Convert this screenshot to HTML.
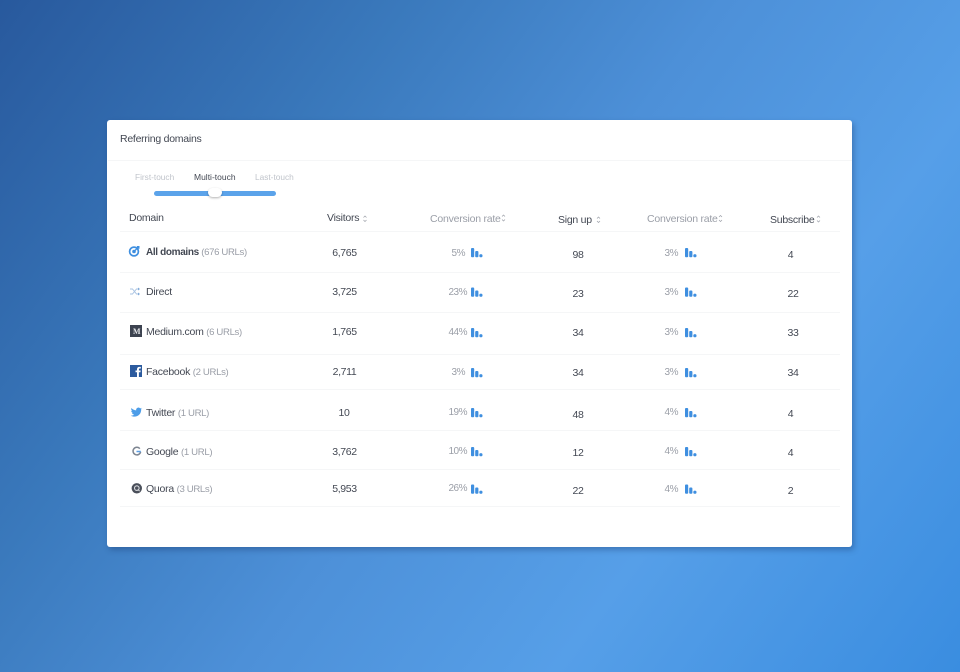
<!DOCTYPE html>
<html><head><meta charset="utf-8"><style>
html,body{margin:0;padding:0;width:960px;height:672px;overflow:hidden}
body{position:relative;background:linear-gradient(126deg,#28599d 0%,#3a79bc 28%,#4d90d8 50%,#569fe8 72%,#3a8de0 100%);font-family:"Liberation Sans",sans-serif;font-size:10.5px;letter-spacing:-.25px;color:#434853}
#card{position:absolute;left:107px;top:120px;width:745px;height:427px;background:#fff;border-radius:3px;box-shadow:2px 3px 6px rgba(20,50,100,.35)}
.t{position:absolute;white-space:nowrap;line-height:14px;height:14px;margin-top:2px;filter:blur(.25px)}
.c{transform:translateX(-50%)}
.g{color:#9a9ea7}
span.g{font-size:9.600px;letter-spacing:-.35px}
div.g{font-size:10px;letter-spacing:-.5px}
div.h{font-size:10.5px;letter-spacing:-.23px}
.n{letter-spacing:-.35px}
.s{font-size:8.300px;letter-spacing:0}
.l{position:absolute;left:120px;width:720px;height:1px;background:#f5f6f7}
svg{position:absolute;overflow:visible}
</style></head><body>
<div id="card"></div>
<div class="l" style="left:108px;width:744px;top:160px"></div>
<div class="l" style="top:231px"></div><div class="l" style="top:272px"></div><div class="l" style="top:312px"></div><div class="l" style="top:354px"></div><div class="l" style="top:389px"></div><div class="l" style="top:430px"></div><div class="l" style="top:469px"></div><div class="l" style="top:506px"></div>

<div class="t" style="left:120px;top:130px">Referring domains</div>
<div class="t s" style="left:135px;top:168px;color:#c0c4cb">First-touch</div>
<div class="t s" style="left:194px;top:168px;font-size:8.500px">Multi-touch</div>
<div class="t s" style="left:255px;top:168px;color:#c0c4cb">Last-touch</div>
<div style="position:absolute;left:154px;top:191px;width:122px;height:4.500px;border-radius:3px;background:#5ba3ea"></div>
<div style="position:absolute;left:208px;top:188px;width:14px;height:9px;border-radius:5px;background:#fff;box-shadow:0 1px 2px rgba(0,0,0,.3)"></div>

<div class="t" style="left:129px;top:209px">Domain</div>
<div class="t" style="left:327px;top:209px">Visitors</div>
<div class="t g h" style="left:430px;top:210px">Conversion rate</div>
<div class="t" style="left:558px;top:211px">Sign up</div>
<div class="t g h" style="left:647px;top:210px">Conversion rate</div>
<div class="t" style="left:770px;top:211px">Subscribe</div>

<svg width="960" height="672" style="left:0;top:0" fill="none" stroke="#9a9ea7" stroke-width=".7">
<path d="M363.500 217.500l1.500-1.500 1.500 1.500M363.500 220l1.500 1.500 1.500-1.500"/>
<path d="M502 216.500l1.500-1.500 1.500 1.500M502 219.500l1.500 1.500 1.500-1.500"/>
<path d="M597 218.500l1.500-1.500 1.500 1.500M597 221l1.500 1.500 1.500-1.500"/>
<path d="M719 217l1.500-1.500 1.500 1.500M719 220l1.500 1.500 1.500-1.500"/>
<path d="M817 217.500l1.500-1.500 1.500 1.500M817 220.500l1.500 1.500 1.500-1.500"/>
</svg>

<!-- icons -->
<svg style="left:0;top:0" width="960" height="672">
<circle cx="134" cy="251.500" r="4.400" fill="none" stroke="#3f8fe0" stroke-width="1.700"/><circle cx="134" cy="251.500" r="1.800" fill="#3f8fe0"/><path d="M134 251.500l4.500-4.500" stroke="#3f8fe0" stroke-width="1.300"/><path d="M136.800 246h2.700v2.700h-2.300z" fill="#3f8fe0"/>
<path d="M130 289h2.500l4 5h2.500M130 294h2.500l4-5h2.500" fill="none" stroke="#a9c3e2" stroke-width=".9"/><path d="M138 287.500l2 1.500-2 1.500zM138 292.500l2 1.500-2 1.500z" fill="#7fa8d8"/>
<rect x="130" y="325" width="12" height="12" fill="#3d4350"/>
<rect x="130" y="365" width="12" height="12" fill="#2c5b9e"/><path d="M138.900 377v-4.700h1.500l.3-1.800h-1.800v-1.100c0-.6.2-.9.9-.9h1v-1.600h-1.400c-1.500 0-2.400.9-2.400 2.300v1.300h-1.500v1.800h1.500v4.700z" fill="#fff"/>
<path d="M141.500 408.300c-.4.2-.8.300-1.300.4.500-.3.800-.7 1-1.200-.4.300-.9.500-1.400.6a2.300 2.300 0 0 0-3.900 2.100c-1.900-.1-3.600-1-4.700-2.400-.6 1-.3 2.300.7 3-.4 0-.7-.1-1-.3 0 1.100.8 2 1.800 2.300-.3.100-.7.100-1 0 .3.900 1.100 1.500 2.100 1.600-1 .8-2.200 1.100-3.400 1 4.700 2.800 10.800-.2 10.500-6.500.5-.3.900-.7 1.200-1.100z" fill="#4d9de8" transform="translate(.3 .2)"/>
<path d="M139.800 448.700a3.800 3.800 0 1 0 .8 3" fill="none" stroke="#7d8591" stroke-width="1.500"/><path d="M136.500 451.500h4.300" stroke="#5b9ee4" stroke-width="1.500"/>
<circle cx="136.800" cy="488.300" r="5.200" fill="#4a4f5a"/><circle cx="136.800" cy="488.100" r="2.300" fill="none" stroke="#d8dade" stroke-width="1.100"/><path d="M137.800 489.300l1.800 1.800" stroke="#d8dade"/>
</svg>
<div class="t" style="left:133px;top:323px;font:bold 8px/14px 'Liberation Serif',serif;color:#e8e9ec">M</div>

<!-- names -->
<div class="t" style="left:146px;top:244px;font-weight:bold;font-size:10px;letter-spacing:-.35px">All domains <span class="g" style="font-weight:normal">(676 URLs)</span></div>
<div class="t" style="left:146px;top:283px">Direct</div>
<div class="t" style="left:146px;top:323px">Medium.com <span class="g">(6 URLs)</span></div>
<div class="t" style="left:146px;top:363px">Facebook <span class="g">(2 URLs)</span></div>
<div class="t" style="left:146px;top:404px">Twitter <span class="g">(1 URL)</span></div>
<div class="t" style="left:146px;top:443px">Google <span class="g">(1 URL)</span></div>
<div class="t" style="left:146px;top:480px">Quora <span class="g">(3 URLs)</span></div>

<!-- visitors -->
<div class="t c n" style="left:344.500px;top:244px">6,765</div>
<div class="t c n" style="left:344.500px;top:283px">3,725</div>
<div class="t c n" style="left:344.500px;top:323px">1,765</div>
<div class="t c n" style="left:344.500px;top:363px">2,711</div>
<div class="t c n" style="left:344px;top:404px">10</div>
<div class="t c n" style="left:344.500px;top:443px">3,762</div>
<div class="t c n" style="left:344.500px;top:480px">5,953</div>

<!-- conv 1 -->
<div class="t g" style="right:495px;top:245px">5%</div>
<div class="t g" style="right:493px;top:284px">23%</div>
<div class="t g" style="right:493px;top:324px">44%</div>
<div class="t g" style="right:495px;top:364px">3%</div>
<div class="t g" style="right:493px;top:404px">19%</div>
<div class="t g" style="right:493px;top:443px">10%</div>
<div class="t g" style="right:493px;top:480px">26%</div>

<!-- conv 2 -->
<div class="t g" style="right:282px;top:245px">3%</div>
<div class="t g" style="right:282px;top:284px">3%</div>
<div class="t g" style="right:282px;top:324px">3%</div>
<div class="t g" style="right:282px;top:364px">3%</div>
<div class="t g" style="right:282px;top:404px">4%</div>
<div class="t g" style="right:282px;top:443px">4%</div>
<div class="t g" style="right:282px;top:481px">4%</div>

<svg style="left:0;top:0" width="960" height="672" fill="#3f8fe0">
<defs><g id="b"><rect x="0" y="0" width="3.200" height="9.300" rx="1"/><rect x="4.200" y="3" width="3.200" height="6.300" rx="1"/><circle cx="9.900" cy="7.700" r="1.600"/></g></defs>
<use href="#b" x="471" y="248"/><use href="#b" x="471" y="287.500"/><use href="#b" x="471" y="328"/><use href="#b" x="471" y="368"/><use href="#b" x="471" y="408"/><use href="#b" x="471" y="447"/><use href="#b" x="471" y="484.500"/>
<use href="#b" x="685" y="248"/><use href="#b" x="685" y="287.500"/><use href="#b" x="685" y="328"/><use href="#b" x="685" y="368"/><use href="#b" x="685" y="408"/><use href="#b" x="685" y="447"/><use href="#b" x="685" y="484.500"/>
</svg>

<!-- sign up -->
<div class="t c n" style="left:578px;top:246px">98</div>
<div class="t c n" style="left:578px;top:285px">23</div>
<div class="t c n" style="left:578px;top:324px">34</div>
<div class="t c n" style="left:578px;top:364px">34</div>
<div class="t c n" style="left:578px;top:406px">48</div>
<div class="t c n" style="left:578px;top:444px">12</div>
<div class="t c n" style="left:578px;top:482px">22</div>

<!-- subscribe -->
<div class="t c n" style="left:790.500px;top:246px">4</div>
<div class="t c n" style="left:793px;top:285px">22</div>
<div class="t c n" style="left:793px;top:324px">33</div>
<div class="t c n" style="left:793px;top:364px">34</div>
<div class="t c n" style="left:790.500px;top:405px">4</div>
<div class="t c n" style="left:790.500px;top:444px">4</div>
<div class="t c n" style="left:790.500px;top:482px">2</div>
</body></html>
